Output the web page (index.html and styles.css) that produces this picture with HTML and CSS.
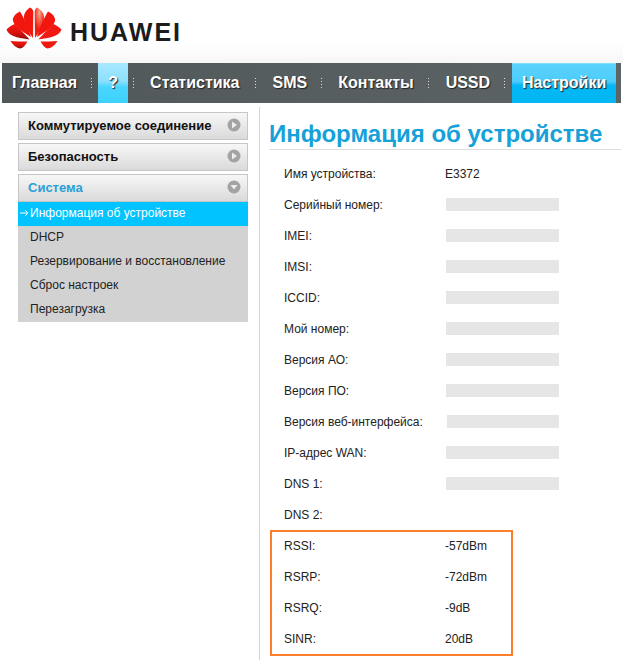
FILE: index.html
```html
<!DOCTYPE html>
<html lang="ru">
<head>
  <meta charset="UTF-8">
  <title>Информация об устройстве</title>
  <link rel="stylesheet" href="styles.css">
</head>
<body>
  <header class="header">
    <svg class="logo-mark" width="56" height="42" viewBox="-28 0 56 42">
      <defs>
        <radialGradient id="petal-light" cx="0.5" cy="0.18" r="0.55">
          <stop offset="0" stop-color="#fba78f"/>
          <stop offset="0.5" stop-color="#f6604a"/>
          <stop offset="1" stop-color="#f01d12"/>
        </radialGradient>
        <linearGradient id="petal-dark" x1="0" y1="0" x2="0" y2="1">
          <stop offset="0" stop-color="#f2140e"/>
          <stop offset="0.55" stop-color="#dc130e"/>
          <stop offset="1" stop-color="#8c0b0b"/>
        </linearGradient>
      </defs>
      <path fill="#f1170f" d="M-1 31 C-5 25 -10.500 17 -10 9.500 C-9.700 5.500 -6.500 2 -4 0.500 C-1.800 1.500 -0.800 3 -0.700 5 Z"/>
      <path fill="#f1170f" d="M-3 30 C-9 26 -19 21 -21 14 C-22 10 -17.500 6 -14 4.500 C-10 11 -5.500 21 -3 30 Z"/>
      <path fill="url(#petal-dark)" d="M-4.500 32.500 C-11 31 -24.500 31 -27.500 22.500 C-25 20 -22 18 -19.500 17 C-14.500 22 -8 28 -4.500 32.500 Z"/>
      <path fill="url(#petal-dark)" d="M-6.500 34.500 C-12 34.500 -18 34.500 -23.500 34 C-21 38.500 -16.500 41.500 -13.500 41.500 C-11 41 -8.500 38 -6.500 34.500 Z"/>
      <path fill="url(#petal-light)" d="M1 31 C5 25 10.500 17 10 9.500 C9.500 5.500 6 2 3 0.500 C1.500 1.500 0.800 3 0.700 5 Z"/>
      <path fill="#f1170f" d="M3 30 C9 26 19 21 21 14 C22 10 17.500 6 14 4.500 C10 11 5.500 21 3 30 Z"/>
      <path fill="#f01a12" d="M4.500 32.500 C11 31 24.500 31 27.500 22.500 C25 20 22 18 19.500 17 C14.500 22 8 28 4.500 32.500 Z"/>
      <path fill="#ee1a12" d="M6.500 34.500 C12 34.500 18 34.500 23.500 34 C21 38.500 16.500 41.500 13.500 41.500 C11 41 8.500 38 6.500 34.500 Z"/>
    </svg>
    <span class="logo-text">HUAWEI</span>
  </header>

  <nav class="nav">
    <a class="nav-item nav-home">Главная</a>
    <i class="nav-sep"></i>
    <a class="nav-item nav-help active-light">?</a>
    <i class="nav-sep"></i>
    <a class="nav-item nav-stats">Статистика</a>
    <i class="nav-sep"></i>
    <a class="nav-item nav-sms">SMS</a>
    <i class="nav-sep"></i>
    <a class="nav-item nav-contacts">Контакты</a>
    <i class="nav-sep"></i>
    <a class="nav-item nav-ussd">USSD</a>
    <i class="nav-sep"></i>
    <a class="nav-item nav-settings active">Настройки</a>
  </nav>

  <div class="main">
    <aside class="sidebar">
      <div class="menu-head">
        <span>Коммутируемое соединение</span>
        <svg class="arrow" width="16" height="16" viewBox="0 0 16 16"><circle cx="8" cy="8" r="6.500" fill="#a3a3a3"/><path d="M6 4.500 L11 8 L6 11.500 Z" fill="#eee"/></svg>
      </div>
      <div class="menu-head">
        <span>Безопасность</span>
        <svg class="arrow" width="16" height="16" viewBox="0 0 16 16"><circle cx="8" cy="8" r="6.500" fill="#a3a3a3"/><path d="M6 4.500 L11 8 L6 11.500 Z" fill="#eee"/></svg>
      </div>
      <div class="menu-head open">
        <span>Система</span>
        <svg class="arrow" width="16" height="16" viewBox="0 0 16 16"><circle cx="8" cy="8" r="6.500" fill="#a3a3a3"/><path d="M4.500 6 L11.500 6 L8 10.500 Z" fill="#eee"/></svg>
      </div>
      <ul class="submenu">
        <li class="current">
          <svg class="current-arrow" width="9" height="8" viewBox="0 0 9 8"><path d="M0 4 H8 M5 1 L8 4 L5 7" fill="none" stroke="#fff" stroke-width="1"/></svg>Информация об устройстве
        </li>
        <li>DHCP</li>
        <li>Резервирование и восстановление</li>
        <li>Сброс настроек</li>
        <li>Перезагрузка</li>
      </ul>
    </aside>

    <section class="content">
      <h1 class="title">Информация об устройстве</h1>
      <div class="rows">
        <div class="row"><span class="label">Имя устройства:</span><span class="value">E3372</span></div>
        <div class="row"><span class="label">Серийный номер:</span><span class="blank"></span></div>
        <div class="row"><span class="label">IMEI:</span><span class="blank"></span></div>
        <div class="row"><span class="label">IMSI:</span><span class="blank"></span></div>
        <div class="row"><span class="label">ICCID:</span><span class="blank"></span></div>
        <div class="row"><span class="label">Мой номер:</span><span class="blank"></span></div>
        <div class="row"><span class="label">Версия АО:</span><span class="blank"></span></div>
        <div class="row"><span class="label">Версия ПО:</span><span class="blank"></span></div>
        <div class="row"><span class="label">Версия веб-интерфейса:</span><span class="blank blank-wide"></span></div>
        <div class="row"><span class="label">IP-адрес WAN:</span><span class="blank"></span></div>
        <div class="row"><span class="label">DNS 1:</span><span class="blank"></span></div>
        <div class="row"><span class="label">DNS 2:</span></div>
        <div class="signal">
          <div class="row"><span class="label">RSSI:</span><span class="value">-57dBm</span></div>
          <div class="row"><span class="label">RSRP:</span><span class="value">-72dBm</span></div>
          <div class="row"><span class="label">RSRQ:</span><span class="value">-9dB</span></div>
          <div class="row"><span class="label">SINR:</span><span class="value">20dB</span></div>
        </div>
      </div>
    </section>
  </div>
</body>
</html>
```

FILE: styles.css
```css
html, body {
  margin: 0;
  padding: 0;
}
body {
  font-family: "Liberation Sans", Arial, sans-serif;
  font-size: 12px;
  color: #222;
  background: #fff;
  width: 623px;
  height: 664px;
  overflow: hidden;
}
.header {
  height: 63px;
  display: flex;
  align-items: flex-start;
  box-sizing: border-box;
  padding: 7px 0 0 6px;
  background: linear-gradient(#fff 70%, #f6f6f6);
}
.logo-mark {
  flex: none;
}
.logo-text {
  margin: 9px 0 0 8px;
  font-size: 25px;
  line-height: 32px;
  font-weight: bold;
  letter-spacing: 2px;
  color: #1c1c1c;
}
.nav {
  height: 40px;
  margin: 0 2px;
  display: flex;
  align-items: center;
  background: linear-gradient(to right, #4f5759, #5c6466);
}
.nav-item {
  height: 40px;
  line-height: 39px;
  font-size: 16px;
  font-weight: bold;
  color: #fff;
  text-shadow: 1px 1px 1px #222;
  box-sizing: border-box;
}
.nav-sep {
  flex: none;
  width: 1px;
  height: 10px;
  background: repeating-linear-gradient(#ddd 0 1px, transparent 1px 3px);
}
.nav-home { padding: 0 14px 0 10px; }
.nav-help { width: 30px; margin: 0 5px 0 6px; text-align: center; }
.nav-stats { padding: 0 15px 0 16px; }
.nav-sms { padding: 0 14px 0 17px; }
.nav-contacts { padding: 0 14px 0 16px; }
.nav-ussd { padding: 0 14px 0 17px; }
.nav-settings { width: 104px; margin-left: 7px; text-align: center; }
.active-light {
  background: linear-gradient(#a8e8ff, #8de0ff 45%, #4ad5ff 60%, #3cd2fd);
}
.active {
  border-top: 1px solid #7fdcfb;
  line-height: 37px;
  background: linear-gradient(#5cd3fb 0, #4cccfb 45%, #03b6f4 55%, #03b6f4 100%);
}
.main {
  display: flex;
  padding: 4px 0 0 18px;
}
.sidebar {
  width: 230px;
  flex: none;
  padding-top: 5px;
}
.menu-head {
  height: 28px;
  margin-bottom: 3px;
  box-sizing: border-box;
  border: 1px solid #c6c6c6;
  padding: 0 5px 2px 9px;
  display: flex;
  align-items: center;
  justify-content: space-between;
  background: linear-gradient(#f7f7f7, #dadada);
  font-size: 13px;
  font-weight: bold;
  color: #111;
}
.menu-head.open {
  margin-bottom: 0;
  color: #2ba0d8;
}
.arrow {
  flex: none;
}
.submenu {
  list-style: none;
  margin: 0;
  padding: 0;
  background: #d2d2d2;
}
.submenu li {
  height: 24px;
  line-height: 23px;
  padding-left: 12px;
  color: #222;
}
.submenu li.current {
  background: #00c3ff;
  color: #fff;
  padding-left: 2px;
}
.current-arrow {
  margin-right: 1px;
}
.content {
  margin-left: 11px;
  width: 352px;
  height: 553px;
  padding-left: 9px;
  border-left: 1px solid #d4d4d4;
}
.title {
  margin: 0;
  height: 43px;
  line-height: 54px;
  box-sizing: border-box;
  font-size: 24px;
  font-weight: bold;
  white-space: nowrap;
  color: #16a1d8;
  border-bottom: 1px solid #dedede;
}
.rows {
  padding-top: 8px;
}
.row {
  height: 31px;
  display: flex;
  align-items: center;
  padding-left: 15px;
  box-sizing: border-box;
}
.label {
  width: 161px;
  flex: none;
}
.value {
  flex: none;
}
.blank {
  width: 113px;
  height: 13px;
  background: #e6e6e6;
  margin-left: 1px;
}
.blank-wide {
  width: 112px;
  margin-left: 2px;
}
.signal {
  margin: 0 0 0 1px;
  width: 243px;
  height: 126px;
  box-sizing: border-box;
  border: 2px solid #fb7f2a;
}
.signal .row {
  padding-left: 12px;
}
.signal .row:first-child {
  margin-top: -2px;
}
```
